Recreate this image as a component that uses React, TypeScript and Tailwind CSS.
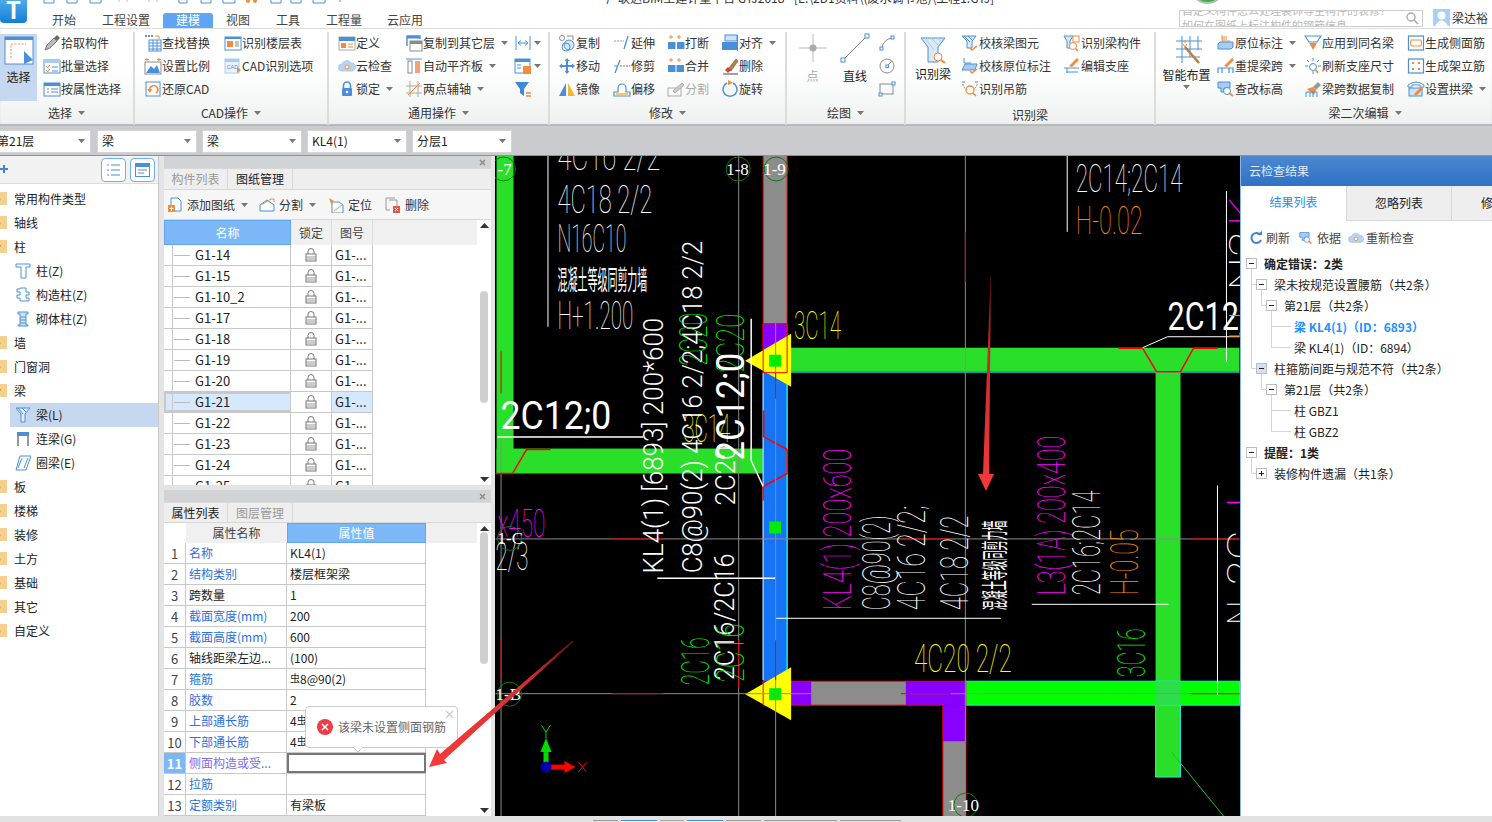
import React from "react";

const B = "#4a90d9", O = "#f58a3c", G = "#8a8a8a", L = "#a9cdf2";

const icons: Record<string, React.ReactNode> = {
  pick: <><path d="M2 16 L4 11 L11 4 L14 7 L7 14 Z" fill="#b9b9b9" stroke="#777" /><path d="M11 4 L14 1 L17 4 L14 7 Z" fill="#6a6a6a" /></>,
  batch: <><rect x="1" y="3" width="16" height="13" fill="#fff" stroke={B} /><rect x="1" y="3" width="16" height="3" fill={L} /><path d="M3 9 L4.5 11 L7 8 M3 13 L4.5 15 L7 12" fill="none" stroke={O} /><path d="M9 10 H15 M9 14 H15" stroke={B} /></>,
  attr: <><rect x="1" y="3" width="16" height="13" fill="#fff" stroke={B} /><rect x="1" y="3" width="16" height="3" fill={B} /><path d="M4 9 H6 M8 9 H15 M4 12 H6 M8 12 H15" stroke={B} /></>,
  find: <><path d="M1 2 H9" stroke={G} strokeWidth="2" strokeDasharray="2 1" /><path d="M11 2 H15 V5" stroke={O} fill="none" /><rect x="5" y="6" width="12" height="11" fill="#fff" stroke={B} /><path d="M5 9 H17 M5 12 H17 M5 15 H17 M9 6 V17 M13 6 V17" stroke={B} /></>,
  scale: <><rect x="1" y="5" width="16" height="12" fill="#fff" stroke={G} /><path d="M2 16 L7 9 L10 12 L13 8 L16 16 Z" fill={B} /><path d="M3 1 L3 4 M1 2.5 H5 M15 1 V4 M13 2.5 H17" stroke={O} /></>,
  restore: <><rect x="2" y="2" width="14" height="14" fill="#fff" stroke={B} /><path d="M6 11 A4 4 0 1 1 12 13" fill="none" stroke={O} strokeWidth="1.6" /><path d="M3 9 L8 9 L6 13 Z" fill={O} /></>,
  floor: <><rect x="1" y="3" width="16" height="13" fill="#fff" stroke={B} /><rect x="1" y="3" width="16" height="2" fill={B} /><rect x="3" y="7" width="6" height="6" fill={O} /><path d="M11 8 H15 M11 10 H15 M11 12 H15" stroke={G} /></>,
  cad: <><rect x="1" y="2" width="14" height="14" fill="#eaf3fc" stroke={L} /><rect x="1" y="2" width="14" height="3" fill={L} /><text x="2.5" y="12" fontSize="5.5" fill={B} fontFamily="Liberation Sans">CAD</text><path d="M13 10 L17 13 L13 16 Z" fill={O} /></>,
  define: <><rect x="1" y="3" width="16" height="13" fill="#fff" stroke="#aaa" /><rect x="1" y="3" width="16" height="4" fill={B} /><rect x="3" y="9" width="5" height="5" fill={O} /><path d="M10 10 H15 M10 13 H15" stroke={O} /></>,
  cloud: <><path d="M4 14 A3.5 3.5 0 0 1 4 7 A5 5 0 0 1 13 6 A4 4 0 0 1 14 14 Z" fill="#b9d3ef" stroke={L} /><circle cx="9" cy="10" r="2" fill="#fff" stroke={O} /></>,
  lock: <><path d="M5.5 8 V5.5 A3.5 3.5 0 0 1 12.5 5.5 V8" fill="none" stroke={B} strokeWidth="1.6" /><rect x="4" y="8" width="10" height="8" rx="1" fill={B} /><circle cx="9" cy="12" r="1.3" fill="#fff" /></>,
  copyto: <><path d="M2 12 V2 H15 V5" fill="none" stroke={B} strokeWidth="1.4" /><rect x="2" y="2" width="13" height="2.5" fill={B} /><rect x="5" y="7" width="12" height="10" fill="#fff" stroke={G} /><rect x="5" y="7" width="12" height="3" fill={G} /></>,
  align2: <><path d="M1 2 H17" stroke={B} /><rect x="3" y="4" width="4" height="12" fill="#fff" stroke={G} /><rect x="10" y="4" width="5" height="12" fill="#f5a07a" /></>,
  twopt: <><path d="M5 1 V17 M13 1 V17 M1 6 H17 M1 13 H17" stroke="#aaa" /><path d="M3 15 L15 3" stroke={O} /></>,
  width: <><path d="M2 2 V16 M16 2 V16" stroke={B} /><path d="M4 9 H14 M4 9 L7 6.5 M4 9 L7 11.5 M14 9 L11 6.5 M14 9 L11 11.5" fill="none" stroke={B} /></>,
  layer: <><rect x="1" y="2" width="15" height="14" fill="#fff" stroke={B} /><rect x="1" y="2" width="15" height="3" fill={B} /><rect x="9" y="9" width="8" height="8" fill={O} /><path d="M3 8 H7 M3 11 H7" stroke={B} /></>,
  filter: <><path d="M1 2 H15 L10 9 V16 L6 13 V9 Z" fill="#3c89d8" /><path d="M12 13 H17 M12 16 H17" stroke={O} strokeWidth="1.4" /></>,
  copy: <><circle cx="4" cy="4" r="2.5" fill="#fff" stroke={G} /><circle cx="11" cy="11" r="5" fill="#d5e6f7" stroke={B} /><circle cx="8" cy="13" r="4" fill="none" stroke={B} /><path d="M9 2 H15 V6" fill="none" stroke={G} /></>,
  move: <path d="M9 1 L11.5 4 H6.5 Z M9 17 L11.5 14 H6.5 Z M1 9 L4 6.5 V11.5 Z M17 9 L14 6.5 V11.5 Z M4 8 H14 V10 H4 Z M8 4 H10 V14 H8 Z" fill={B} />,
  mirror: <><path d="M8 16 V3 L1 16 Z" fill={B} /><path d="M10 16 V3 L17 16 Z" fill="#f5b731" /></>,
  extend: <><path d="M1 7 H11" stroke="#999" strokeDasharray="2 1" /><path d="M11 15 L15 2" stroke={B} strokeWidth="1.3" /></>,
  trim: <><path d="M2 16 L7 3" stroke={B} strokeWidth="1.3" /><path d="M1 9 H5" stroke={B} /><path d="M7 9 H17" stroke="#777" strokeDasharray="2 1" /></>,
  offset: <><path d="M1 16 V12 H5 V8 A4 4 0 0 1 13 8 V12 H17 V16 Z" fill="#fff" stroke={B} strokeWidth="1.2" /><path d="M3 14 H15" stroke="#f5b731" strokeWidth="1.5" /></>,
  brk: <><path d="M4 1 V5 M2 3 H6 M12 1 V5 M10 3 H14" stroke={O} /><rect x="1" y="8" width="7.5" height="7" fill={B} /><rect x="10" y="8" width="7.5" height="7" fill={B} /></>,
  merge: <><path d="M4 1 V5 M2 3 H6 M12 1 V5 M10 3 H14" stroke={O} /><rect x="1" y="8" width="16" height="7" fill={B} /><path d="M9 8 V15" stroke="#fff" /></>,
  split: <><rect x="1" y="8" width="13" height="8" fill="none" stroke="#aaa" /><path d="M6 11 L15 3 L17 5 L8 13 Z" fill="#ccc" stroke="#aaa" /></>,
  align: <><rect x="4" y="1" width="12" height="6" fill="#cfe2f6" stroke={B} /><rect x="1" y="8" width="15" height="8" fill={B} /><path d="M16.5 1 V17" stroke={B} /></>,
  del: <><path d="M7 12 L15 2 L17 4 L10 14 Z" fill="#b77d4b" stroke="#555" strokeWidth=".6" /><path d="M4 13 L7 10 L10 13 L7 16 Z" fill="#d3462a" /><path d="M2 17 H17" stroke="#444" /></>,
  rotate: <><path d="M6 3 A7 7 0 1 0 12 3" fill="none" stroke={B} strokeWidth="1.5" /><path d="M7 0 L12 3 L7 5 Z" fill={O} /></>,
  arc: <><path d="M4 15 A11 11 0 0 1 14 4" fill="none" stroke={G} /><rect x="2" y="13" width="3" height="3" fill="#fff" stroke={B} /><rect x="13" y="2" width="3" height="3" fill="#fff" stroke={B} /></>,
  circ: <><circle cx="9" cy="9" r="7" fill="none" stroke={G} /><rect x="8" y="8" width="2.5" height="2.5" fill="#fff" stroke={B} /><path d="M10 8 L14 4" stroke={G} /></>,
  rect: <><rect x="2" y="4" width="13" height="10" fill="none" stroke={G} /><rect x="1" y="13" width="3" height="3" fill="#fff" stroke={B} /><rect x="14" y="2" width="3" height="3" fill="#fff" stroke={B} /></>,
  chk1: <><path d="M1 2 H15 L11 7 V14 H6 V7 Z" fill="#dbe9f7" stroke={B} /><path d="M3 2 L9 8 M7 2 L11 6" stroke={B} /><path d="M9 14 L11 16 L16 12" fill="none" stroke={O} strokeWidth="1.5" /></>,
  chk2: <><path d="M3 1 V6 H10" fill="none" stroke={B} /><path d="M1 13 L4 7 H16 L14 13 Z" fill={L} stroke={B} /><path d="M9 14 L11 16 L16 12" fill="none" stroke={O} strokeWidth="1.5" /></>,
  hang: <><path d="M1 2 H4 M14 2 H17" stroke={B} /><path d="M2 4 A7 6 0 0 0 16 4" fill="none" stroke={G} strokeDasharray="2 1" /><circle cx="9" cy="10" r="4" fill="#fff" stroke={O} strokeWidth="1.3" /><path d="M12 13 L15 16" stroke={O} strokeWidth="1.6" /></>,
  comp: <><path d="M1 2 H10 L7 7 V14 H4 V7 Z" fill="#dbe9f7" stroke={B} /><rect x="10" y="2" width="6" height="6" fill="#fff" stroke={O} /><circle cx="10" cy="12" r="3.5" fill="#fff" stroke={O} /><path d="M12.5 14.5 L15 17" stroke={O} strokeWidth="1.5" /></>,
  support: <><path d="M6 9 L14 1 L16 3 L9 10 Z" fill={O} /><path d="M1 11 H16 M3 15 H15 M4 11 V16" stroke={B} /></>,
  orig: <><path d="M5 1 V7 H13 M5 3 H10 M5 5 H10" fill="none" stroke={O} /><path d="M1 15 V10 L3 8 H16 V13 L14 15 Z" fill={L} stroke={B} /></>,
  respan: <><path d="M7 9 L15 1 L17 3 L10 10 Z" fill={O} /><path d="M1 16 V11 H16 V16 M5 11 V16 M12 11 V16" fill="none" stroke={B} strokeWidth="1.2" /></>,
  elev: <><path d="M1 2 H13 V8 H7 V12 H4 V8 H1 Z" fill={L} stroke={B} /><circle cx="10" cy="11" r="3.5" fill="#fff" stroke={B} /><path d="M12 13 L16 16" stroke={O} strokeWidth="2" /></>,
  same: <><path d="M1 2 H17 L13 8 H5 Z" fill="#fff" stroke={B} strokeWidth="1.2" /><path d="M5 9 H13 L9 16 Z" fill={O} /></>,
  refresh: <><path d="M9 1 V4 M9 14 V17 M1 9 H4 M14 9 H17 M3 3 L5 5 M15 3 L13 5" stroke={B} /><circle cx="9" cy="10" r="3.5" fill="#fff" stroke={B} /><path d="M11 12 L14 16" stroke={O} strokeWidth="1.5" /></>,
  brush: <><path d="M9 7 L14 2 L17 5 L12 10 Z" fill="#999" /><path d="M3 9 L9 7 L12 10 L10 15 Z" fill={O} /><path d="M2 17 V12 H13 V17 M6 12 V17 M9 12 V17" fill="none" stroke={B} /></>,
  side: <><rect x="1.5" y="2" width="15" height="14" fill="#fff" stroke={B} strokeWidth="1.2" /><path d="M4 6 H14 M4 12 H14 M4 6 Q3 9 4 12 M14 6 Q15 9 14 12" fill="none" stroke={O} /></>,
  stand: <><rect x="1.5" y="2" width="15" height="14" fill="#fff" stroke={B} strokeWidth="1.2" /><path d="M5 5 H7 V7 H5 Z M11 5 H13 V7 H11 Z M5 11 H7 V13 H5 Z M11 11 H13 V13 H11 Z" fill={O} /></>,
  arch: <><path d="M1 5 Q9 -1 17 5 V7 H13 V5 H5 V7 H1 Z" fill="#fff" stroke={B} /><rect x="2" y="8" width="13" height="8" fill="#cfe2f6" stroke={B} /><path d="M7 14 L14 7 L16 9 L9 16 Z" fill={O} /></>,
};

const Ic = ({ n, s = 18 }: { n: string; s?: number }) => (
  <svg width={s} height={s} viewBox="0 0 18 18" className="shrink-0">{icons[n]}</svg>
);

const Caret = ({ c = "#777" }: { c?: string }) => (
  <svg width="7" height="4" viewBox="0 0 7 4" className="shrink-0"><path d="M0 0 H7 L3.5 4 Z" fill={c} /></svg>
);

const Row = ({ n, t, caret, off }: { n: string; t?: string; caret?: boolean; off?: boolean }) => (
  <div className={`flex h-[23px] items-center whitespace-nowrap ${off ? "text-[#aaa]" : "text-[#333]"}`}>
    <Ic n={n} />
    {t && <span>{t}</span>}
    {caret && <span className={t ? "ml-[6px]" : "ml-[2px]"}><Caret /></span>}
  </div>
);

const Group = ({ cls, label, caret = true, children }: { cls: string; label: string; caret?: boolean; children: React.ReactNode }) => (
  <div className={`mt-[3px] flex h-[93px] shrink-0 flex-col border-r-2 border-[#dcdcdc] ${cls}`}>
    <div className="mt-[-1px] flex h-[70px]">{children}</div>
    <div className={`flex h-[24px] items-center justify-center gap-[6px] text-[#333] ${caret ? "" : "pt-[3px]"}`}>{label}{caret && <Caret />}</div>
  </div>
);

const Combo = ({ t, cls }: { t: string; cls: string }) => (
  <div className={`flex h-[23px] items-center justify-between border border-[#d5d5d5] bg-white pl-[4px] pr-[5px] text-[#222] ${cls}`}>
    <span>{t}</span><Caret />
  </div>
);

const Folder = ({ open }: { open?: boolean }) => (
  <svg width="16" height="14" viewBox="0 0 16 14" className="ml-[-8px] mr-[6px] shrink-0">
    <path d="M0 2 H6 L8 0 H15 V13 H0 Z" fill="#f5cf8e" />
    {open ? <rect x="3" y="5" width="6" height="1.6" fill="#c98f3c" /> : <path d="M6 5 V10 M3.5 7.5 H8.5" stroke="#d39a44" strokeWidth="1.5" />}
  </svg>
);

const TreeHead = ({ t, open }: { t: string; open?: boolean }) => (
  <div className="flex h-[24px] items-center text-[#222]"><Folder open={open} />{t}</div>
);

const TreeIcons: Record<string, React.ReactNode> = {
  zhu: <path d="M1 1 H15 V4 H11 V15 H6 V4 H1 Z" fill="#fff" stroke={B} />,
  gz: <path d="M5 1 H11 V5 H14 V8 H11 V11 H14 V14 H5 V11 H2 V8 H5 V5 H2 V2 H5 Z" fill="#fff" stroke={B} />,
  qt: <><path d="M3 1 H13 V3 H11 V14 H13 V15 H3 V14 H5 V3 H3 Z" fill="#cfe2f6" stroke={B} /><path d="M5 6 H11 M5 9 H11 M5 12 H11" stroke={B} /></>,
  liang: <><path d="M1 1 H15 L10 7 V15 H6 V7 Z" fill="#e0ecf9" stroke={B} /><path d="M3 1 L8 7 M7 1 L11 5" stroke={B} /></>,
  lian: <><rect x="2" y="1" width="12" height="4" fill={B} /><path d="M3 5 V15 M13 5 V15" stroke="#999" strokeWidth="2" /></>,
  quan: <path d="M5 1 H16 L11 15 H1 Z M7 3 L3 13 M13 3 L9 13" fill="#fff" stroke={B} />,
};

const SubItem = ({ n, t, sel }: { n: string; t: string; sel?: boolean }) => (
  <div className={`ml-[10px] flex h-[24px] items-center gap-[5px] pl-[5px] text-[#222] ${sel ? "bg-[#c6d8f0]" : ""}`}>
    <svg width="16" height="16" viewBox="0 0 16 16" className="shrink-0">{TreeIcons[n]}</svg>{t}
  </div>
);

const Lock = () => (
  <svg width="12" height="14" viewBox="0 0 12 14">
    <path d="M3 6 V3.5 A3 3 0 0 1 9 3.5 V6" fill="none" stroke="#777" />
    <rect x="1" y="6" width="10" height="7" fill="#fff" stroke="#777" />
    <path d="M1 9 H11 M1 11 H11" stroke="#999" />
  </svg>
);

const PanelTop = () => (
  <div className="flex h-[12px] shrink-0 items-center justify-end bg-[#d2d3d5] pr-[5px] text-[#777]">
    <svg width="7" height="7" viewBox="0 0 7 7"><path d="M1 1 L6 6 M6 1 L1 6" stroke="#888" strokeWidth="1.4" /></svg>
  </div>
);

const Tabs2 = ({ a, b, first, cls }: { a: string; b: string; first: boolean; cls: string }) => (
  <div className={`flex shrink-0 border-y border-[#d8d8d8] bg-[#eeeeee] ${cls}`}>
    <div className={`flex w-[64px] items-center justify-center border-r border-[#d8d8d8] ${first ? "text-[#222]" : "text-[#999]"}`}>{a}</div>
    <div className={`flex w-[65px] items-center justify-center border-r border-[#d8d8d8] ${first ? "text-[#999]" : "text-[#222]"}`}>{b}</div>
  </div>
);

const ScrollBar = ({ cls }: { cls: string }) => (
  <div className="flex w-[14px] shrink-0 flex-col items-center bg-white py-[3px]">
    <svg width="9" height="5" viewBox="0 0 9 5" className="shrink-0"><path d="M0 5 L4.5 0 L9 5 Z" fill="#333" /></svg>
    <div className={`w-[8px] rounded-[4px] bg-[#cfcfcf] ${cls}`} />
    <svg width="9" height="5" viewBox="0 0 9 5" className="mt-auto shrink-0"><path d="M0 0 L4.5 5 L9 0 Z" fill="#333" /></svg>
  </div>
);

const sheets = ["G1-14", "G1-15", "G1-10_2", "G1-17", "G1-18", "G1-19", "G1-20", "G1-21", "G1-22", "G1-23", "G1-24", "G1-25"];

const Bar = () => <span className="relative top-[-2px] text-[10px]">虫</span>;

const props: [string, React.ReactNode, boolean][] = [
  ["名称", "KL4(1)", true],
  ["结构类别", "楼层框架梁", true],
  ["跨数量", "1", false],
  ["截面宽度(mm)", "200", true],
  ["截面高度(mm)", "600", true],
  ["轴线距梁左边...", "(100)", false],
  ["箍筋", <><Bar />8@90(2)</>, true],
  ["胶数", "2", true],
  ["上部通长筋", <>4<Bar /></>, true],
  ["下部通长筋", <>4<Bar /></>, true],
  ["侧面构造或受...", "", true],
  ["拉筋", "", true],
  ["定额类别", "有梁板", true],
];

const T = ({ x, y, s, l, c = "#fff", r, t, w = 100, f = "Roboto" }: { x: number; y: number; s: number; l: number; c?: string; r?: boolean; t: string; w?: number; f?: string }) => (
  <text x={x} y={y} fontSize={s} fill={c} textLength={l} lengthAdjust="spacingAndGlyphs" fontFamily={f} fontWeight={w} transform={r ? `rotate(-90 ${x} ${y})` : undefined}>{t}</text>
);

const Axis = ({ x, y, t, tx }: { x: number; y: number; t: string; tx?: number }) => (
  <g>
    <circle cx={x} cy={y} r="12" fill="none" stroke="#0a7a0a" />
    <text x={tx ?? x - 13} y={y + 6} fontSize="17" fill="#fff" fontFamily="Liberation Serif">{t}</text>
  </g>
);

const Cad = () => (
  <svg viewBox="495 155 745 661" width="745" height="661" className="block h-full w-full bg-black">
    <rect x="496" y="155" width="17" height="318" fill="#2adf2a" />
    <rect x="496" y="448" width="268" height="25" fill="#2adf2a" />
    <rect x="787" y="347" width="453" height="24" fill="#2adf2a" />
    <rect x="1156" y="371" width="25" height="406" fill="#2adf2a" />
    <path d="M787 371.5 H1240" stroke="#22e8e8" />
    <rect x="966" y="681" width="274" height="24" fill="#00ff00" stroke="#22e8e8" />
    <rect x="1156" y="681" width="25" height="24" fill="#2adf4a" />
    <path d="M1156 705 V777 H1181 V705" fill="none" stroke="#22e8e8" />
    <path d="M1172 752 L1224 816" stroke="#1fc01f" />
    <rect x="763" y="155" width="24" height="168" fill="#8c8c8c" />
    <rect x="763" y="323" width="24" height="49" fill="#8800ff" />
    <rect x="763" y="372" width="24" height="309" fill="#1474f5" />
    <path d="M763 155 V372 H787 V155" fill="none" stroke="#f00" />
    <path d="M787 372 V690" stroke="#22e8e8" strokeWidth="1.5" />
    <path d="M763 372 V680" stroke="#9cc8f0" strokeWidth="1.5" />
    <path d="M763.5 410 V436 L787 449 V473 L763 486 V500" fill="none" stroke="#f00" strokeWidth="1.5" />
    <rect x="763" y="681" width="48" height="24" fill="#8800ff" />
    <rect x="811" y="681" width="95" height="24" fill="#8c8c8c" />
    <rect x="906" y="681" width="60" height="24" fill="#8800ff" />
    <rect x="943" y="705" width="23" height="36" fill="#8800ff" />
    <rect x="943" y="741" width="23" height="75" fill="#8c8c8c" />
    <path d="M763 681 H966 V816 M763 705 H943 V816" fill="none" stroke="#f00" />
    <path d="M763 681 V705" stroke="#f00" />
    <path d="M745 360 L791 333 V386 Z" fill="#ffff00" />
    <path d="M745 694 L791 667 V720 Z" fill="#ffff00" />
    <path d="M763 323 H787 V372 H763 Z M763 681 V705" fill="none" stroke="#f00" />
    <rect x="769" y="354" width="12" height="12" fill="#00ee00" />
    <rect x="769" y="521" width="12" height="12" fill="#00ee00" />
    <rect x="769" y="688" width="12" height="12" fill="#00ee00" />
    <g stroke="#8c8c8c">
      <path d="M500.5 440 V816 M738.5 155 V816 M775.5 155 V816 M965.5 155 V816" />
      <path d="M495 538.5 H1240 M495 693.5 H1240" />
    </g>
    <g stroke="#e00000">
      <path d="M612 538.5 H663 M612 693.5 H663 M901 538.5 H951 M901 693.5 H951 M1190 538.5 H1240 M1190 693.5 H1240" />
      <path d="M500.5 350 V393 M500.5 638 V680 M965.5 231 V281 M775.5 640 V680 M775.5 372 V398 M738.5 640 V687" />
    </g>
    <path d="M495 473 H512 L526 449 H550" fill="none" stroke="#f00" strokeWidth="1.5" />
    <path d="M1119 347.5 H1143 L1157 371 H1181 L1194 347.5 H1218" fill="none" stroke="#f00" strokeWidth="1.5" />
    <g stroke="#fff" fill="none">
      <path d="M547.5 155 V326" />
      <path d="M497 436.5 H643" strokeWidth="1.5" />
      <path d="M751 318 V460 L763 486" strokeWidth="1.5" />
      <path d="M657 578 H775" strokeWidth="1.5" />
      <path d="M776 618 H1001 M1032 604 H1169 M1067.5 155 V231 M1227 190 V361 M1218 485 V695" />
      <path d="M1143 347 L1168 336 H1240" />
    </g>
    <T x={557} y={169} s={38} l={103} t="4C16 2/2" />
    <T x={557} y={212} s={38} l={95} t="4C18 2/2" />
    <T x={557} y={251} s={38} l={69} t="N16C10" />
    <T x={557} y={289} s={27} l={90} t="混凝土等级同剪力墙" f="Noto Sans CJK SC" w={400} />
    <T x={557} y={328} s={38} l={76} t="H+1.200" />
    <T x={500} y={428} s={38} l={111} t="2C12;0" w={400} />
    <T x={794} y={338} s={38} l={47} c="#ffff00" t="3C14" />
    <T x={683} y={441} s={38} l={47} c="#ffff00" t="3C14" />
    <T x={914} y={672} s={38} l={98} c="#ffff00" t="4C20 2/2" />
    <T x={497} y={537} s={38} l={48} c="#ff00ff" t="x450" />
    <T x={495} y={570} s={38} l={33} t="2/3" />
    <T x={1076} y={191} s={38} l={107} t="2C14;2C14" />
    <T x={1076} y={233} s={38} l={67} c="#ff8c00" t="H-0.02" />
    <T x={1168} y={329} s={38} l={95} t="2C12;0" w={400} />
    <T r x={663} y={573} s={27} l={256} t="KL4(1) [6893] 200*600" w={300} />
    <T r x={702} y={573} s={27} l={333} t="C8@90(2) 4C16 2/2;4C18 2/2" w={300} />
    <T r x={707} y={365} s={38} l={53} c="#00ee00" t="2C20" />
    <T r x={744} y={372} s={38} l={59} c="#00ee00" t="2C20" />
    <T r x={735} y={505} s={27} l={60} t="2C20" w={300} />
    <T r x={744} y={460} s={38} l={108} t="2C12;0" w={400} />
    <T r x={734} y={680} s={27} l={127} t="2C16/2C16" w={300} />
    <T r x={709} y={685} s={38} l={48} c="#00ee00" t="2C16" />
    <T r x={744} y={682} s={38} l={59} c="#00ee00" t="2C16" />
    <T r x={851} y={610} s={38} l={162} c="#ff00ff" t="KL4(1) 200x600" />
    <T r x={890} y={610} s={38} l={95} t="C8@90(2)" />
    <T r x={925} y={610} s={38} l={105} t="4C16 2/2;" />
    <T r x={968} y={610} s={38} l={95} t="4C18 2/2" />
    <T r x={1005} y={610} s={27} l={90} t="混凝土等级同剪力墙" f="Noto Sans CJK SC" w={400} />
    <T r x={1065} y={595} s={38} l={160} c="#ff00ff" t="L3(1A) 200x400" />
    <T r x={1100} y={595} s={38} l={105} t="2C16;2C14" />
    <T r x={1138} y={595} s={38} l={66} c="#ff8c00" t="H-0.05" />
    <T r x={1145} y={677} s={38} l={49} c="#00ee00" t="3C16" />
    <T r x={1256} y={625} s={38} l={25} t="N" />
    <T r x={1256} y={585} s={38} l={55} t="2C" />
    <T r x={1256} y={508} s={38} l={28} c="#ff00ff" t="L" />
    <T r x={1258} y={225} s={38} l={30} c="#ff00ff" t="K" />
    <T r x={1258} y={290} s={38} l={60} t="N2" />
    <T r x={1258} y={340} s={38} l={30} c="#ff8c00" t="H" />
    <Axis x={503} y={168} t="-7" tx={497} />
    <Axis x={738} y={168} t="1-8" tx={726} />
    <Axis x={776} y={168} t="1-9" tx={763} />
    <Axis x={509} y={538} t="1-C" tx={497} />
    <Axis x={509} y={694} t="1-B" tx={495} />
    <Axis x={966} y={805} t="1-10" tx={948} />
    <path d="M545.5 767 V752" stroke="#00dd00" strokeWidth="5" />
    <path d="M540 752 L545.5 738 L551 752 Z" fill="#00dd00" />
    <path d="M541 725 L545.5 732 L550 725 M545.5 732 V738" stroke="#00dd00" fill="none" />
    <path d="M550 767 H566" stroke="#f00" strokeWidth="5" />
    <path d="M564 761 L575 767 L564 773 Z" fill="#f00" />
    <circle cx="545.5" cy="767" r="5.5" fill="#0000b0" />
    <path d="M578 762 L586 772 M586 762 L578 772" stroke="#f00" />
  </svg>
);

type TR = { t: string; box?: "-" | "+"; lvl: number; bold?: boolean; blue?: boolean; hi?: boolean; g: string };
const rows: TR[] = [
  { t: "确定错误：2类", box: "-", lvl: 0, bold: true, g: "M10.5 16 V21" },
  { t: "梁未按规范设置腰筋（共2条）", box: "-", lvl: 1, g: "M10.5 0 V21 M10.5 10.5 H15 M20.5 16 V21" },
  { t: "第21层（共2条）", box: "-", lvl: 2, g: "M10.5 0 V21 M20.5 0 V10.5 H25 M30.5 16 V21" },
  { t: "梁 KL4(1)（ID：6893）", lvl: 3, bold: true, blue: true, g: "M10.5 0 V21 M30.5 0 V21 M30.5 10.5 H50" },
  { t: "梁 KL4(1)（ID：6894）", lvl: 3, g: "M10.5 0 V21 M30.5 0 V10.5 H50" },
  { t: "柱箍筋间距与规范不符（共2条）", box: "-", lvl: 1, hi: true, g: "M10.5 0 V10.5 H15 M20.5 16 V21" },
  { t: "第21层（共2条）", box: "-", lvl: 2, g: "M20.5 0 V10.5 H25 M30.5 16 V21" },
  { t: "柱 GBZ1", lvl: 3, g: "M30.5 0 V21 M30.5 10.5 H50" },
  { t: "柱 GBZ2", lvl: 3, g: "M30.5 0 V10.5 H50" },
  { t: "提醒：1类", box: "-", lvl: 0, bold: true, g: "M10.5 16 V21" },
  { t: "装修构件遗漏（共1条）", box: "+", lvl: 1, g: "M10.5 0 V10.5 H15" },
];
const textPad = [23, 33, 43, 53];

const TreeRow = ({ r }: { r: TR }) => {
  const bx = 5 + r.lvl * 10;
  return (
    <div className="flex h-[21px] items-center whitespace-nowrap">
      <svg width={textPad[r.lvl]} height="21" viewBox={`0 0 ${textPad[r.lvl]} 21`} className="shrink-0">
        <path d={r.g} stroke="#d4d4d4" fill="none" />
        {r.box && (
          <>
            <rect x={bx + 0.5} y="5.5" width="10" height="10" fill={r.hi ? "#d3e0f2" : "#fff"} stroke="#bdbdbd" />
            <path d={r.box === "-" ? `M${bx + 3} 10.5 H${bx + 8}` : `M${bx + 3} 10.5 H${bx + 8} M${bx + 5.5} 8 V13`} stroke="#222" />
          </>
        )}
      </svg>
      <span className={`${r.bold ? "font-bold" : ""} ${r.blue ? "text-[#1e90ff]" : "text-[#222]"}`}>{r.t}</span>
    </div>
  );
};

export default function App() {
  return (
    <div className="flex h-[822px] w-[1492px] flex-col overflow-hidden bg-white font-['Noto_Sans_CJK_SC',sans-serif] text-[12px] leading-none">
      <div className="relative flex h-[29px] shrink-0 items-end overflow-hidden border-b border-[#dddddd]">
        <div className="absolute left-0 top-[-6px] flex h-[29px] w-[27px] items-center justify-center rounded-[4px] bg-gradient-to-b from-[#5ab5ee] to-[#0f7fd6]">
          <span className="text-[24px] font-bold text-white">T</span>
        </div>
        <svg width="340" height="4" viewBox="0 0 340 4" className="absolute left-[43px] top-0">
          <path d="M1 0 V3 H11 V0 M24 0 V3 H34 V0 M47 0 V3 H58 V0" fill="none" stroke={B} />
          <path d="M76 0 V2 M84 0 V2 M106 0 V2 M114 0 V2" stroke="#bbb" />
          <path d="M136 0 V3 H144 V0 M158 0 V3 H168 V0 M180 0 V3 H192 V0" fill="none" stroke={B} />
          <circle cx="205" cy="1" r="2" fill={O} /><circle cx="212" cy="1" r="2" fill={O} />
          <path d="M228 0 V3 H238 V0 M248 0 V3 H258 V0 M270 0 V3 H282 V0" fill="none" stroke={B} />
          <path d="M297 0 V2" stroke="#888" />
        </svg>
        <div className="absolute left-[606px] top-[-8px] whitespace-nowrap text-[#333]">广联达BIM土建计量平台 GTJ2018 - [E:\2D1资料\(废水调节池)\工程1.GTJ]</div>
        <div className="absolute left-[1190px] top-[-31px] h-[35px] w-[35px] rounded-full border-2 border-[#bbbbbb] bg-[#35b04a]" />
        <div className="absolute left-[1179px] top-[10px] h-[17px] w-[244px] overflow-hidden border border-[#cccccc] pl-[2px] text-[11px] leading-[13px] text-[#b8b8b8]">
          <div className="mt-[-7px]">自定义构件怎么处理装饰等生构件的表修?</div>
          <div className="mt-[2px]">如何在图纸上标注构件的钢筋信息</div>
        </div>
        <svg width="14" height="14" viewBox="0 0 14 14" className="absolute left-[1405px] top-[11px]"><circle cx="6" cy="6" r="4" fill="none" stroke="#aaa" strokeWidth="1.4" /><path d="M9 9 L13 13" stroke="#aaa" strokeWidth="1.6" /></svg>
        <svg width="17" height="17" viewBox="0 0 17 17" className="absolute left-[1433px] top-[9px]"><rect width="17" height="17" fill="#a8cff5" /><circle cx="8.5" cy="6.5" r="4" fill="#fff" /><path d="M2 17 Q8.5 6 15 17 Z" fill="#fff" /></svg>
        <span className="absolute left-[1452px] top-[12px] text-[#333]">梁达裕</span>
        <div className="ml-[39px] flex h-[15px] text-[#444]">
          <div className="flex w-[50px] items-center justify-center pb-[2px]">开始</div>
          <div className="flex w-[74px] items-center justify-center pb-[2px]">工程设置</div>
          <div className="flex w-[50px] items-center justify-center rounded-t-[3px] bg-[#5ea6f3] pb-[2px] text-white">建模</div>
          <div className="flex w-[50px] items-center justify-center pb-[2px]">视图</div>
          <div className="flex w-[50px] items-center justify-center pb-[2px]">工具</div>
          <div className="flex w-[62px] items-center justify-center pb-[2px]">工程量</div>
          <div className="flex w-[60px] items-center justify-center pb-[2px]">云应用</div>
        </div>
      </div>

      <div className="flex h-[97px] shrink-0 overflow-hidden bg-gradient-to-b from-white from-40% to-[#eef0f0] shadow-[inset_0_-2px_1px_#b5b7ba]">
        <Group cls="w-[135px]" label="选择">
          <div className="mt-[3px] flex h-[67px] w-[37px] shrink-0 flex-col items-center bg-[#c6d8f0] pt-[2px]">
            <svg width="30" height="30" viewBox="0 0 30 30"><rect x="1" y="1" width="28" height="27" fill="#fff" stroke={B} /><rect x="1" y="1" width="28" height="3" fill={B} /><path d="M7 22 V8 H22" fill="none" stroke={O} strokeDasharray="2 1.5" /><path d="M20 15 L29 24 L20 28 Z" fill={B} /></svg>
            <span className="mt-[5px] text-[#222]">选择</span>
          </div>
          <div className="ml-[6px] flex flex-col">
            <Row n="pick" t="拾取构件" /><Row n="batch" t="批量选择" /><Row n="attr" t="按属性选择" />
          </div>
        </Group>
        <Group cls="w-[194px]" label="CAD操作">
          <div className="ml-[9px] flex w-[80px] flex-col"><Row n="find" t="查找替换" /><Row n="scale" t="设置比例" /><Row n="restore" t="还原CAD" /></div>
          <div className="flex flex-col"><Row n="floor" t="识别楼层表" /><Row n="cad" t="CAD识别选项" /></div>
        </Group>
        <Group cls="w-[221px]" label="通用操作">
          <div className="ml-[9px] flex w-[67px] flex-col"><Row n="define" t="定义" /><Row n="cloud" t="云检查" /><Row n="lock" t="锁定" caret /></div>
          <div className="flex w-[109px] flex-col"><Row n="copyto" t="复制到其它层" caret /><Row n="align2" t="自动平齐板" caret /><Row n="twopt" t="两点辅轴" caret /></div>
          <div className="flex flex-col"><Row n="width" caret /><Row n="layer" caret /><Row n="filter" /></div>
        </Group>
        <Group cls="w-[237px]" label="修改">
          <div className="ml-[8px] flex w-[55px] flex-col"><Row n="copy" t="复制" /><Row n="move" t="移动" /><Row n="mirror" t="镜像" /></div>
          <div className="flex w-[54px] flex-col"><Row n="extend" t="延伸" /><Row n="trim" t="修剪" /><Row n="offset" t="偏移" /></div>
          <div className="flex w-[54px] flex-col"><Row n="brk" t="打断" /><Row n="merge" t="合并" /><Row n="split" t="分割" off /></div>
          <div className="flex flex-col"><Row n="align" t="对齐" caret /><Row n="del" t="删除" /><Row n="rotate" t="旋转" /></div>
        </Group>
        <Group cls="w-[119px]" label="绘图">
          <div className="ml-[3px] flex w-[45px] flex-col items-center pt-[2px]">
            <svg width="30" height="30" viewBox="0 0 30 30"><path d="M15 1 V29 M1 15 H29" stroke="#bbb" /><circle cx="15" cy="15" r="3.5" fill="#aaa" /></svg>
            <span className="mt-[7px] text-[#aaa]">点</span>
          </div>
          <div className="flex w-[40px] flex-col items-center pt-[2px]">
            <svg width="30" height="30" viewBox="0 0 30 30"><path d="M3 27 L27 3" stroke="#777" /><rect x="1" y="25" width="4" height="4" fill="#fff" stroke={B} /><rect x="25" y="1" width="4" height="4" fill="#fff" stroke={B} /></svg>
            <span className="mt-[7px] text-[#222]">直线</span>
          </div>
          <div className="ml-[3px] flex flex-col"><Row n="arc" /><Row n="circ" /><Row n="rect" /></div>
        </Group>
        <Group cls="w-[250px]" label="识别梁" caret={false}>
          <div className="ml-[4px] flex w-[46px] shrink-0 flex-col items-center pt-[5px]">
            <svg width="28" height="28" viewBox="0 0 28 28"><path d="M2 2 H26 L19 11 V26 H9 V11 Z" fill="#dbe9f7" stroke={B} /><path d="M6 2 L15 14 M12 2 L20 10 M18 2 L23 6" stroke={L} /><circle cx="19" cy="21" r="4" fill="#fff" stroke={O} /><path d="M22 24 L26 27" stroke={O} strokeWidth="2" /></svg>
            <span className="mt-[4px] text-[#222]">识别梁</span>
          </div>
          <div className="ml-[5px] flex w-[102px] flex-col"><Row n="chk1" t="校核梁图元" /><Row n="chk2" t="校核原位标注" /><Row n="hang" t="识别吊筋" /></div>
          <div className="flex flex-col"><Row n="comp" t="识别梁构件" /><Row n="support" t="编辑支座" /></div>
        </Group>
        <Group cls="w-[420px] border-r-0" label="梁二次编辑">
          <div className="ml-[6px] flex w-[49px] shrink-0 flex-col items-center pt-[4px]">
            <svg width="30" height="30" viewBox="0 0 30 30"><path d="M4 6 H30 M4 14 H30 M4 22 H28 M10 1 V28 M18 1 V22 M26 1 V15" stroke={B} /><path d="M13 12 L27 28" stroke="#b77d4b" strokeWidth="2.5" /><path d="M11 9 L13 12 L15 9 M13 8 V5" stroke={O} fill="none" /></svg>
            <span className="mt-[4px] text-[#222]">智能布置</span>
            <span className="mt-[4px]"><Caret /></span>
          </div>
          <div className="ml-[6px] flex w-[87px] flex-col"><Row n="orig" t="原位标注" caret /><Row n="respan" t="重提梁跨" caret /><Row n="elev" t="查改标高" /></div>
          <div className="flex w-[103px] flex-col"><Row n="same" t="应用到同名梁" /><Row n="refresh" t="刷新支座尺寸" /><Row n="brush" t="梁跨数据复制" /></div>
          <div className="flex flex-col"><Row n="side" t="生成侧面筋" /><Row n="stand" t="生成架立筋" /><Row n="arch" t="设置拱梁" caret /></div>
        </Group>
      </div>

      <div className="flex h-[29px] shrink-0 items-center gap-[5px] bg-[#c9cbce] pt-[1px]">
        <Combo t="第21层" cls="ml-[-8px] w-[99px]" />
        <Combo t="梁" cls="ml-[1px] w-[100px]" />
        <Combo t="梁" cls="w-[100px]" />
        <Combo t="KL4(1)" cls="w-[100px]" />
        <Combo t="分层1" cls="w-[100px]" />
      </div>

      <div className="relative flex h-[661px] shrink-0 border-t border-[#8f9296] bg-[#e4e4e4]">
        <div className="flex w-[159px] shrink-0 flex-col border-r border-[#c8c8c8] bg-white">
          <div className="flex h-[28px] shrink-0 items-center justify-between border-b border-[#dcdcdc] bg-[#f2f2f2] pr-[3px]">
            <svg width="10" height="10" viewBox="0 0 10 10"><path d="M4 0 V8 M0 4 H8" stroke="#3f86d8" strokeWidth="2" /></svg>
            <div className="flex gap-[4px]">
              <div className="flex h-[24px] w-[25px] items-center justify-center rounded-[4px] border border-[#6fb0ee] bg-white"><svg width="15" height="14" viewBox="0 0 15 14"><path d="M1 2 H3 M1 7 H3 M1 12 H3 M5 2 H14 M5 7 H14 M5 12 H14" stroke={B} strokeWidth="1.2" /></svg></div>
              <div className="flex h-[24px] w-[25px] items-center justify-center rounded-[4px] border border-[#6fb0ee] bg-white"><svg width="15" height="14" viewBox="0 0 15 14"><rect x=".5" y=".5" width="14" height="13" fill="#fff" stroke={B} /><rect x="1" y="1" width="13" height="3" fill={B} /><path d="M3 7 H12 M3 10 H9" stroke={B} /></svg></div>
            </div>
          </div>
          <div className="pt-[3px]">
            <TreeHead t="常用构件类型" />
            <TreeHead t="轴线" />
            <TreeHead t="柱" open />
            <SubItem n="zhu" t="柱(Z)" />
            <SubItem n="gz" t="构造柱(Z)" />
            <SubItem n="qt" t="砌体柱(Z)" />
            <TreeHead t="墙" />
            <TreeHead t="门窗洞" />
            <TreeHead t="梁" open />
            <SubItem n="liang" t="梁(L)" sel />
            <SubItem n="lian" t="连梁(G)" />
            <SubItem n="quan" t="圈梁(E)" />
            <TreeHead t="板" />
            <TreeHead t="楼梯" />
            <TreeHead t="装修" />
            <TreeHead t="土方" />
            <TreeHead t="基础" />
            <TreeHead t="其它" />
            <TreeHead t="自定义" />
          </div>
        </div>

        <div className="ml-[5px] flex w-[327px] shrink-0 flex-col gap-[5px]">
          <div className="flex h-[329px] shrink-0 flex-col overflow-hidden bg-white">
            <PanelTop />
            <Tabs2 a="构件列表" b="图纸管理" first={false} cls="h-[22px]" />
            <div className="flex h-[30px] shrink-0 items-center border-b border-[#d8d8d8] bg-[#f6f6f6] pl-[3px] text-[#333]">
              <svg width="16" height="16" viewBox="0 0 16 16" className="mr-[4px]"><path d="M4 1 H11 L14 4 V14 H4 Z" fill="#fff" stroke={B} /><rect x="1" y="8" width="7" height="7" fill={O} /><path d="M2.5 11.5 H6.5 M4.5 9.5 V13.5" stroke="#fff" /></svg>
              添加图纸
              <span className="ml-[6px] mr-[11px]"><Caret /></span>
              <svg width="16" height="16" viewBox="0 0 16 16" className="mr-[4px]"><path d="M1 14 V8 L8 3 L15 8 V14 Z" fill="#fff" stroke={B} /><path d="M2 8 L12 2 M12 2 H15 V5" stroke={O} fill="none" /></svg>
              分割
              <span className="ml-[6px] mr-[12px]"><Caret /></span>
              <svg width="16" height="16" viewBox="0 0 16 16" className="mr-[4px]"><path d="M4 5 H11 L15 8 V16 H4 Z" fill="#fff" stroke={B} /><path d="M1 1 L6 4 L3 7 Z" fill={O} /><path d="M6 14 L14 8" stroke={O} /></svg>
              定位
              <svg width="16" height="16" viewBox="0 0 16 16" className="ml-[13px] mr-[4px]"><path d="M1 1 H10 M1 1 V13 H5" fill="none" stroke="#999" /><path d="M4 3 H12 V9" fill="none" stroke="#999" /><rect x="8" y="9" width="7" height="7" fill="#e05a4a" /><path d="M10 11 L13 14 M13 11 L10 14" stroke="#fff" /></svg>
              删除
            </div>
            <div className="flex min-h-0 flex-1">
              <div className="flex min-w-0 flex-1 flex-col">
                <div className="flex h-[25px] shrink-0 bg-[#f0f0f0] text-[#444]">
                  <div className="flex w-[127px] items-center justify-center border border-[#5fa6ef] bg-[#7cb8f7] text-white">名称</div>
                  <div className="flex w-[41px] items-center justify-center border-r border-[#dddddd]">锁定</div>
                  <div className="flex w-[41px] items-center justify-center border-r border-[#dddddd]">图号</div>
                </div>
                <div className="min-h-0 flex-1 overflow-hidden">
                  {sheets.map((s) => {
                    const sel = s === "G1-21";
                    return (
                      <div key={s} className="flex h-[21px] w-[209px] border-b border-[#c8c8c8] text-[#222]">
                        <div className={`flex w-[127px] items-center border-r border-[#c8c8c8] ${sel ? "border-2 border-[#777777] bg-[#d6e9fc]" : ""}`}>
                          <span className={`${sel ? "ml-[6px]" : "ml-[8px]"} h-full w-px bg-[#c8c8c8]`} />
                          <span className="ml-[1px] h-px w-[16px] bg-[#bbbbbb]" />
                          <span className="ml-[5px] pb-[2px] text-[13px]">{s}</span>
                        </div>
                        <div className="flex w-[41px] items-center justify-center border-r border-[#c8c8c8] pb-[1px]"><Lock /></div>
                        <div className={`flex w-[41px] items-center border-r border-[#c8c8c8] pb-[2px] pl-[3px] text-[13px] ${sel ? "bg-[#d6e9fc]" : ""}`}>G1-...</div>
                      </div>
                    );
                  })}
                </div>
              </div>
              <ScrollBar cls="mt-[63px] h-[112px]" />
            </div>
          </div>
          <div className="flex min-h-0 flex-1 flex-col overflow-hidden bg-white">
            <PanelTop />
            <Tabs2 a="属性列表" b="图层管理" first cls="h-[21px]" />
            <div className="flex min-h-0 flex-1">
              <div className="min-w-0 flex-1">
                <div className="flex h-[20px] bg-[#f0f0f0] text-[#444]">
                  <div className="w-[22px] bg-white" />
                  <div className="flex w-[101px] items-center justify-center">属性名称</div>
                  <div className="flex w-[139px] items-center justify-center border border-[#5fa6ef] bg-[#7cb8f7] text-white">属性值</div>
                </div>
                {props.map(([k, v, link], i) => {
                  const sel = i === 10;
                  return (
                    <div key={i} className="flex h-[21px] w-[262px] border-b border-[#c8c8c8]">
                      <div className={`flex w-[22px] items-center justify-center border-r border-[#c8c8c8] text-[13px] ${sel ? "bg-[#7cb8f7] font-bold text-white" : "text-[#444]"}`}>{i + 1}</div>
                      <div className={`flex w-[101px] items-center border-r border-[#c8c8c8] pl-[3px] ${link ? (sel ? "text-[#7a6be8]" : "text-[#2a6fe0]") : "text-[#222]"}`}>{k}</div>
                      <div className={`flex w-[139px] items-center pl-[3px] text-[#222] ${sel ? "border-2 border-[#777777]" : "border-r border-[#c8c8c8]"}`}><span>{v}</span></div>
                    </div>
                  );
                })}
              </div>
              <ScrollBar cls="mt-[1px] h-[132px]" />
            </div>
          </div>
        </div>

        <div className="ml-[4px] h-full w-[745px] shrink-0 overflow-hidden"><Cad /></div>

        <div className="flex min-w-0 flex-1 flex-col border-l border-[#8ab4e8] bg-white">
          <div className="flex h-[30px] shrink-0 items-center bg-gradient-to-b from-[#4a87d0] to-[#2f72c4] pl-[8px] text-[#dfe8f5]">云检查结果</div>
          <div className="flex h-[35px] shrink-0 overflow-hidden">
            <div className="flex w-[105px] shrink-0 items-center justify-center pb-[3px] text-[#2a8cf0]">结果列表</div>
            <div className="flex w-[106px] shrink-0 items-center justify-center border-x border-b border-[#d8d8d8] bg-[#eeeeee] text-[#222]">忽略列表</div>
            <div className="flex w-[60px] shrink-0 items-center border-b border-[#d8d8d8] bg-[#eeeeee] pl-[29px] text-[#222]">修改</div>
          </div>
          <div className="flex h-[32px] shrink-0 items-center pl-[8px] pt-[1px] text-[#444]">
            <svg width="14" height="14" viewBox="0 0 14 14" className="mr-[3px]"><path d="M11.5 4 A5 5 0 1 0 12 9" fill="none" stroke="#3f86d8" strokeWidth="2" /><path d="M8 4 H13 V0 Z" fill="#3f86d8" /></svg>
            刷新
            <span className="ml-[9px]"><Ic n="elev" s={14} /></span>
            <span className="ml-[4px]">依据</span>
            <span className="ml-[7px] mr-[2px]"><Ic n="cloud" s={16} /></span>
            重新检查
          </div>
          <div className="text-[#222]">
            {rows.map((r, i) => <TreeRow key={i} r={r} />)}
          </div>
        </div>

        <div className="absolute left-[305px] top-[550px] flex h-[42px] w-[153px] items-center rounded-[4px] border border-[#cccccc] bg-white pl-[11px] text-[#666]">
          <svg width="16" height="16" viewBox="0 0 16 16" className="mr-[5px] shrink-0"><circle cx="8" cy="8" r="8" fill="#ee3b46" /><path d="M5 5 L11 11 M11 5 L5 11" stroke="#fff" strokeWidth="1.6" /></svg>
          该梁未设置侧面钢筋
          <svg width="9" height="9" viewBox="0 0 9 9" className="absolute right-[3px] top-[3px]"><path d="M1 1 L8 8 M8 1 L1 8" stroke="#cccccc" strokeWidth="1.3" /></svg>
          <svg width="10" height="6" viewBox="0 0 10 6" className="absolute bottom-[-6px] left-[47px]"><path d="M0 0 L5 5 L10 0" fill="#fff" stroke="#cccccc" /></svg>
        </div>

        <svg width="1492" height="661" viewBox="0 155 1492 661" className="pointer-events-none absolute left-0 top-0">
          <defs>
            <linearGradient id="a1" x1="0" y1="0" x2="0" y2="1"><stop offset="0" stopColor="#701010" /><stop offset="0.35" stopColor="#c52a2a" /><stop offset="1" stopColor="#f83a3a" /></linearGradient>
            <linearGradient id="a2" x1="1" y1="0" x2="0" y2="1"><stop offset="0" stopColor="#701010" /><stop offset="0.3" stopColor="#d03030" /><stop offset="1" stopColor="#f83a3a" /></linearGradient>
          </defs>
          <path d="M990.5 276 L991 276 L989 473 L994 473 L986 490 L978 473 L983 473 Z" fill="url(#a1)" />
          <path d="M574 640 L444 759 L447 762 L429 766 L437 748 L440 753 L572 640 Z" fill="url(#a2)" />
        </svg>
      </div>

      <div className="flex h-[6px] shrink-0 items-end bg-[#e2e2e2] pl-[593px]">
        <div className="flex gap-[3px]">
          <div className="h-[2px] w-[25px] border-t border-[#999999]" />
          <div className="h-[2px] w-[36px] border-t border-[#3c8ce0] bg-white" />
          <div className="h-[2px] w-[24px] border-t border-[#aaaaaa]" />
          <div className="h-[2px] w-[36px] border-t border-[#3c8ce0] bg-white" />
          <div className="h-[2px] w-[35px] border-t border-[#999999]" />
          <div className="h-[2px] w-[73px] border-t border-[#999999]" />
          <div className="h-[2px] w-[61px] border-t border-[#999999]" />
        </div>
      </div>
    </div>
  );
}
